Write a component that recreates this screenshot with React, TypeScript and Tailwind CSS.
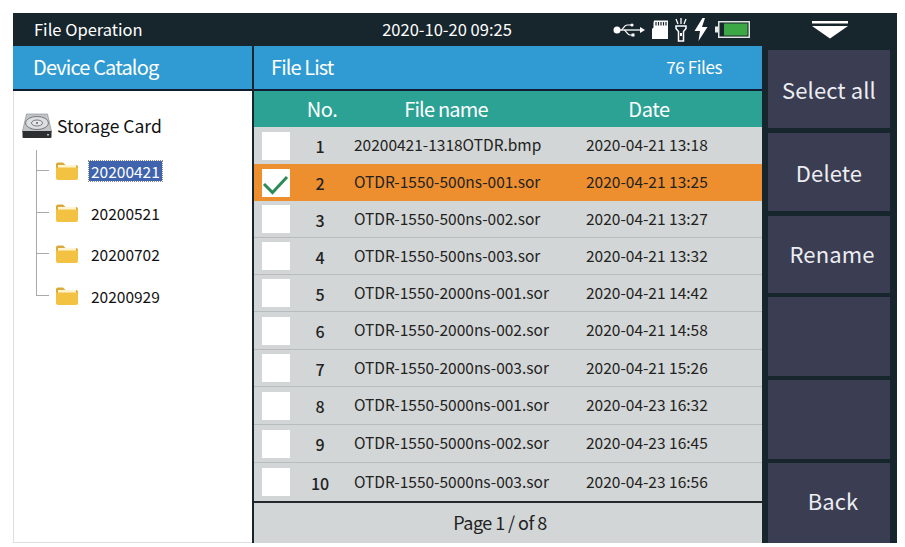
import React from "react";

const FONT = "font-['Noto_Sans_CJK_SC','Noto_Sans',sans-serif]";

const rows = [
  ["1", "20200421-1318OTDR.bmp", "2020-04-21 13:18", "h-[37px]"],
  ["2", "OTDR-1550-500ns-001.sor", "2020-04-21 13:25", "h-[37px]"],
  ["3", "OTDR-1550-500ns-002.sor", "2020-04-21 13:27", "h-[37px]"],
  ["4", "OTDR-1550-500ns-003.sor", "2020-04-21 13:32", "h-[37px]"],
  ["5", "OTDR-1550-2000ns-001.sor", "2020-04-21 14:42", "h-[37px]"],
  ["6", "OTDR-1550-2000ns-002.sor", "2020-04-21 14:58", "h-[38px]"],
  ["7", "OTDR-1550-2000ns-003.sor", "2020-04-21 15:26", "h-[37px]"],
  ["8", "OTDR-1550-5000ns-001.sor", "2020-04-23 16:32", "h-[38px]"],
  ["9", "OTDR-1550-5000ns-002.sor", "2020-04-23 16:45", "h-[38px]"],
  ["10", "OTDR-1550-5000ns-003.sor", "2020-04-23 16:56", "h-[38px]"],
];

function Folder() {
  return (
    <svg width="24" height="20" viewBox="0 0 24 20" className="shrink-0">
      <path d="M1 3.5 Q1 1.5 3 1.5 H8 L10.5 4 H21 Q23 4 23 6 V8 H1 Z" fill="#d9a93a" />
      <rect x="3" y="4" width="18" height="4" fill="#fff3d0" />
      <path d="M1 6.5 H23 V17 Q23 19 21 19 H3 Q1 19 1 17 Z" fill="#f4c242" />
    </svg>
  );
}

function Disk() {
  return (
    <svg width="30" height="26" viewBox="0 0 30 26" className="shrink-0">
      <path d="M4.5 1 H25.5 L29.5 18 V19 H0.5 V18 Z" fill="#c2c5c7" stroke="#85888a" strokeWidth="0.6" />
      <path d="M0.5 18 H29.5 V24 Q29.5 25 28.5 25 H1.5 Q0.5 25 0.5 24 Z" fill="#2c2e30" />
      <ellipse cx="15" cy="10" rx="11.5" ry="6.5" fill="#dcdee0" stroke="#5f6264" strokeWidth="0.8" />
      <ellipse cx="15" cy="10" rx="5.5" ry="3" fill="#e6e8e9" stroke="#5f6264" strokeWidth="0.8" />
      <circle cx="15" cy="10" r="1" fill="#5f6264" />
      <rect x="25" y="21" width="2" height="1.5" fill="#b8babc" />
    </svg>
  );
}

function UsbIcon() {
  return (
    <svg width="32" height="16" viewBox="0 0 32 16" className="shrink-0">
      <circle cx="4" cy="8" r="3.5" fill="#fff" />
      <path d="M4 8 H28" stroke="#fff" strokeWidth="1.3" />
      <path d="M27 5 L32 8 L27 11 Z" fill="#fff" />
      <path d="M8 8 C10 8 11 3 14 3 H18 M11 8 C13 8 14 13 17 13 H19" stroke="#fff" strokeWidth="1.2" fill="none" />
      <circle cx="19" cy="3" r="1.6" fill="#fff" />
      <rect x="18.5" y="11.5" width="3" height="3" fill="#fff" />
    </svg>
  );
}

function SdIcon() {
  return (
    <svg width="16" height="19" viewBox="0 0 16 19" className="shrink-0">
      <path d="M2 0.5 H16 V19 H0 V9 L1.5 7.5 V3 Z" fill="#fff" />
      <path d="M4 2 V5.5 M6.5 2 V5.5 M9 2 V5.5 M11.5 2 V5.5 M14 2 V5.5" stroke="#17252d" strokeWidth="1.2" />
    </svg>
  );
}

function TorchIcon() {
  return (
    <svg width="12" height="24" viewBox="0 0 12 24" className="shrink-0">
      <path d="M1 1 L3 6 M6 0 V6 M11 1 L9 6" stroke="#fff" strokeWidth="1.3" />
      <path d="M1 8 H11 V10.5 L8.5 13.5 V23 H3.5 V13.5 L1 10.5 Z" fill="none" stroke="#fff" strokeWidth="1.5" />
      <rect x="5" y="15" width="2" height="3" fill="#fff" />
    </svg>
  );
}

function BoltIcon() {
  return (
    <svg width="14" height="23" viewBox="0 0 14 23" className="shrink-0">
      <path d="M8.5 0 L0.5 13 H6 L4.5 23 L13.5 9 H8 L11 0 Z" fill="#fff" />
    </svg>
  );
}

function BatteryIcon() {
  return (
    <svg width="35" height="17" viewBox="0 0 35 17" className="shrink-0">
      <rect x="0" y="5.5" width="3" height="6" fill="#e8ece8" />
      <rect x="3.75" y="0.75" width="30.5" height="15.5" fill="none" stroke="#dfe5df" strokeWidth="1.5" />
      <rect x="9" y="2.5" width="23.5" height="12" fill="#3ca845" />
    </svg>
  );
}

function DownArrow() {
  return (
    <svg width="36" height="18" viewBox="0 0 36 18">
      <rect x="0" y="0" width="36" height="2.5" fill="#fff" />
      <path d="M0 5 H36 L18 17.5 Z" fill="#fff" />
    </svg>
  );
}

function Check() {
  return (
    <svg width="28" height="28" viewBox="0 0 28 28">
      <path d="M2 15 L10.5 23.5 L25 8" fill="none" stroke="#2e8b57" strokeWidth="3" />
    </svg>
  );
}

function TreeItem({ label, selected, last }: { label: string; selected?: boolean; last?: boolean }) {
  return (
    <div className="flex h-[41.7px] items-stretch">
      <div className="flex w-[13px] shrink-0 flex-col">
        <div className="h-1/2 border-b border-l border-[#a9a9a9]" />
        <div className={last ? "h-1/2" : "h-1/2 border-l border-[#a9a9a9]"} />
      </div>
      <div className="ml-[6px] flex items-center">
        <Folder />
        <span
          className={
            selected
              ? "ml-[10px] bg-[#3f63ad] px-[2px] text-[15.5px] leading-[20px] text-white outline-1 outline-dotted outline-[#8a8a8a]"
              : "ml-[12px] text-[15.5px] leading-[20px] text-[#111]"
          }
        >
          {label}
        </span>
      </div>
    </div>
  );
}

function SideButton({ label, h, mt, extra }: { label?: string; h: string; mt: string; extra?: string }) {
  return (
    <div className={`flex items-center justify-center bg-[#3b3d52] text-[22px] tracking-[0.1px] text-[#eceef2] ${h} ${mt} ${extra ?? ""}`}>
      {label}
    </div>
  );
}

export default function App() {
  return (
    <div className={`${FONT} h-[547px] w-[905px] overflow-hidden bg-white pb-[4px] pl-[13px] pr-[8px] pt-[13px]`}>
      <div className="flex h-full w-full flex-col">
        <div className="flex h-[33px] shrink-0 items-center bg-[#17252d] text-white">
          <div className="w-[300px] pl-[21px] text-[16.5px]">File Operation</div>
          <div className="w-[268px] text-center text-[16.5px]">2020-10-20 09:25</div>
          <div className="flex w-[171px] items-center gap-[7px] pl-[32px]">
            <UsbIcon />
            <SdIcon />
            <TorchIcon />
            <BoltIcon />
            <BatteryIcon />
          </div>
          <div className="flex flex-1 justify-center pl-[11px]">
            <DownArrow />
          </div>
        </div>

        <div className="flex min-h-0 flex-1">
          <div className="flex w-[239px] shrink-0 flex-col">
            <div className="flex h-[45px] shrink-0 items-center border-b-[2px] border-[#101d33] bg-[#2f9bd2] pb-[1px] pl-[20px] text-[20px] tracking-[-0.85px] text-white">
              Device Catalog
            </div>
            <div className="flex-1 border-b border-l border-[#dedede] bg-white pl-[8px]">
              <div className="mt-[20px] flex h-[30px] items-center">
                <Disk />
                <span className="ml-[5px] text-[17.5px] text-[#111]">Storage Card</span>
              </div>
              <div className="ml-[14px] flex flex-col pt-[9px]">
                <TreeItem label="20200421" selected />
                <TreeItem label="20200521" />
                <TreeItem label="20200702" />
                <TreeItem label="20200929" last />
              </div>
            </div>
          </div>

          <div className="flex w-[510px] shrink-0 flex-col border-l-[2px] border-[#17252d]">
            <div className="flex h-[45px] shrink-0 items-center justify-between border-b-[2px] border-[#101d33] bg-[#2f9bd2] pb-[1px] pl-[17px] pr-[40px] text-white">
              <span className="text-[20px] tracking-[-0.9px]">File List</span>
              <span className="text-[17px] tracking-[-0.4px]">76 Files</span>
            </div>
            <div className="flex h-[36px] shrink-0 items-center bg-[#2ca295] text-[20px] tracking-[-0.4px] text-white">
              <div className="w-[44px]" />
              <div className="w-[48px] text-center">No.</div>
              <div className="w-[200px] text-center tracking-[-0.8px]">File name</div>
              <div className="w-[206px] text-center">Date</div>
            </div>
            <div className="flex flex-col border-b-[2px] border-[#22282c] bg-[#d3d6d6]">
              {rows.map(([no, name, date, h], i) => (
                <div
                  key={no}
                  className={`flex shrink-0 items-center text-[15.5px] text-[#222] ${h} ${
                    i === 1 ? "bg-[#ee8f2f]" : i === 0 || i === 9 ? "" : "border-b border-[#b9bcbc]"
                  }`}
                >
                  <div className="ml-[8px] flex h-[28px] w-[28px] shrink-0 items-center justify-center bg-white">
                    {i === 1 && <Check />}
                  </div>
                  <div className="ml-[6px] w-[48px] shrink-0 pt-[1px] text-center text-[16px] font-medium">{no}</div>
                  <div className="w-[242px] shrink-0 pb-[1px] pl-[10px]">{name}</div>
                  <div className="shrink-0 pb-[1px]">{date}</div>
                </div>
              ))}
            </div>
            <div className="flex min-h-0 flex-1 items-center justify-center bg-[#d3d6d6] pb-[2px] pr-[16px] text-[18px] tracking-[-0.55px] text-[#222]">
              Page 1 / of 8
            </div>
          </div>

          <div className="flex w-[135px] shrink-0 flex-col bg-[#17252d] pl-[6px] pr-[7px]">
            <SideButton label="Select all" h="h-[78px]" mt="mt-[4px]" />
            <SideButton label="Delete" h="h-[78px]" mt="mt-[5px]" />
            <SideButton label="Rename" h="h-[77px]" mt="mt-[5px]" extra="pb-[3px] pl-[6px]" />
            <SideButton h="h-[79px]" mt="mt-[4px]" />
            <SideButton h="h-[79px]" mt="mt-[4px]" />
            <SideButton label="Back" h="h-[80px]" mt="mt-[4px]" extra="pb-[5px] pl-[8px]" />
          </div>
        </div>
      </div>
    </div>
  );
}
